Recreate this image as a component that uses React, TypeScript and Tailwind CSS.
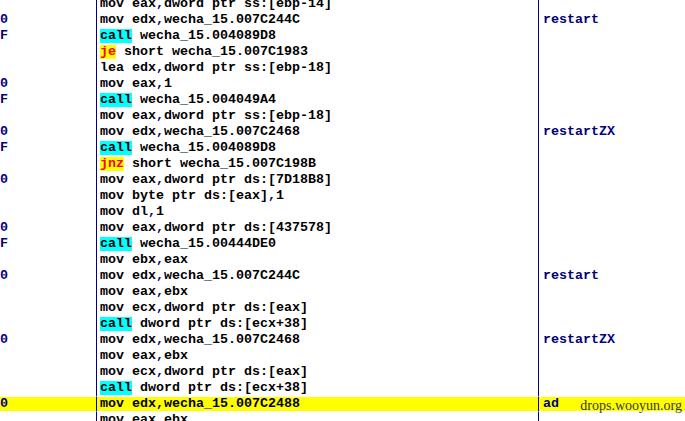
type Row = {
  mark?: string;
  op: string;
  args?: string;
  note?: string;
  hl?: boolean;
};

const rows: Row[] = [
  { op: "mov", args: "eax,dword ptr ss:[ebp-14]" },
  { mark: "0", op: "mov", args: "edx,wecha_15.007C244C", note: "restart" },
  { mark: "F", op: "call", args: "wecha_15.004089D8" },
  { op: "je", args: "short wecha_15.007C1983" },
  { op: "lea", args: "edx,dword ptr ss:[ebp-18]" },
  { mark: "0", op: "mov", args: "eax,1" },
  { mark: "F", op: "call", args: "wecha_15.004049A4" },
  { op: "mov", args: "eax,dword ptr ss:[ebp-18]" },
  { mark: "0", op: "mov", args: "edx,wecha_15.007C2468", note: "restartZX" },
  { mark: "F", op: "call", args: "wecha_15.004089D8" },
  { op: "jnz", args: "short wecha_15.007C198B" },
  { mark: "0", op: "mov", args: "eax,dword ptr ds:[7D18B8]" },
  { op: "mov", args: "byte ptr ds:[eax],1" },
  { op: "mov", args: "dl,1" },
  { mark: "0", op: "mov", args: "eax,dword ptr ds:[437578]" },
  { mark: "F", op: "call", args: "wecha_15.00444DE0" },
  { op: "mov", args: "ebx,eax" },
  { mark: "0", op: "mov", args: "edx,wecha_15.007C244C", note: "restart" },
  { op: "mov", args: "eax,ebx" },
  { op: "mov", args: "ecx,dword ptr ds:[eax]" },
  { op: "call", args: "dword ptr ds:[ecx+38]" },
  { mark: "0", op: "mov", args: "edx,wecha_15.007C2468", note: "restartZX" },
  { op: "mov", args: "eax,ebx" },
  { op: "mov", args: "ecx,dword ptr ds:[eax]" },
  { op: "call", args: "dword ptr ds:[ecx+38]" },
  { mark: "0", op: "mov", args: "edx,wecha_15.007C2488", note: "ad", hl: true },
  { op: "mov", args: "eax,ebx" },
];

// commas come out navy in the debugger view
function Args({ text }: { text: string }) {
  const parts = text.split(",");
  return (
    <>
      {parts.map((p, i) => (
        <span key={i}>
          {i > 0 && <span className="text-[#000080]">,</span>}
          {p}
        </span>
      ))}
    </>
  );
}

function Op({ op }: { op: string }) {
  if (op === "call")
    return <span className="bg-[#00ffff] inline-flex h-[14px] items-center">call</span>;
  if (op === "je" || op === "jnz")
    return <span className="bg-[#ffff00] text-[#ff0000] inline-flex h-[14px] items-center">{op}</span>;
  return <span>{op}</span>;
}

export default function App() {
  return (
    <div className="relative w-[685px] h-[421px] overflow-hidden bg-white font-['Liberation_Mono',monospace] text-[13.33px] font-bold text-black">
      <div className="-mt-[4px] flex flex-col">
        {rows.map((r, i) => {
          const cell = r.hl
            ? "bg-[#ffff00] bg-clip-padding border-y border-y-transparent"
            : "";
          return (
            <div key={i} className="flex h-[16px] whitespace-pre leading-[14px]">
              <div className={`w-[96px] flex items-center text-[#000080] ${cell}`}>
                {r.mark ?? ""}
              </div>
              <div className={`w-[442px] flex items-center border-l border-l-[#000080] pl-[3px] ${cell}`}>
                <Op op={r.op} />
                {r.args && (
                  <>
                    <span> </span>
                    <Args text={r.args} />
                  </>
                )}
              </div>
              <div className={`flex-1 flex items-center border-l border-l-[#000080] pl-[4px] text-[#000080] ${cell}`}>
                {r.note ?? ""}
              </div>
            </div>
          );
        })}
      </div>
      <div className="absolute right-[3px] bottom-[5px] font-['Liberation_Serif',serif] font-normal text-[14px] text-[#3a3a3a]">
        drops.wooyun.org
      </div>
    </div>
  );
}
